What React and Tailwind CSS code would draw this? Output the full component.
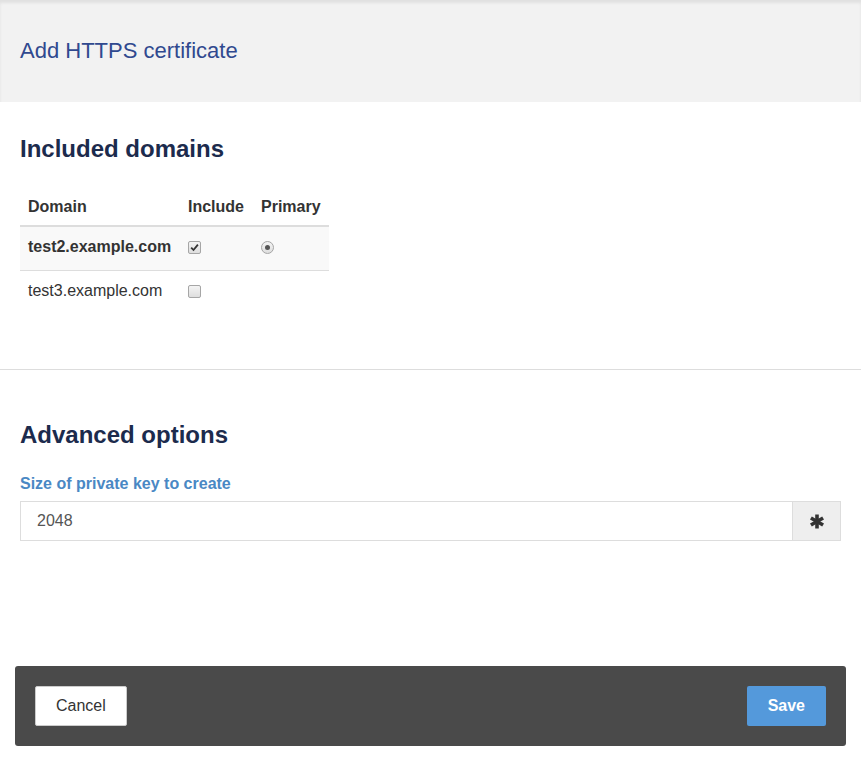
import React from "react";

function Checkbox({ checked }) {
  return (
    <span className="inline-flex h-[13px] w-[13px] items-center justify-center rounded-[2px] border border-[#a6a6a6] bg-gradient-to-b from-[#f4f4f4] to-[#dedede]">
      {checked && (
        <svg width="9" height="9" viewBox="0 0 9 9">
          <path d="M1.2 4.6 L3.5 7 L7.9 1.6" fill="none" stroke="#333" strokeWidth="1.8" />
        </svg>
      )}
    </span>
  );
}

function Radio() {
  return (
    <span className="inline-flex h-[13px] w-[13px] items-center justify-center rounded-full border border-[#a6a6a6] bg-gradient-to-b from-[#f4f4f4] to-[#dedede]">
      <span className="h-[5px] w-[5px] rounded-full bg-[#555]" />
    </span>
  );
}

export default function App() {
  return (
    <div
      className="flex min-h-screen flex-col bg-white text-[#333]"
      style={{ fontFamily: '"Liberation Sans", Arial, sans-serif' }}
    >
      <div className="flex h-[102px] items-center bg-[#f2f2f2] px-5 shadow-[inset_0_3px_3px_rgba(0,0,0,0.07)]">
        <h1 className="text-[22px] leading-[26px] text-[#30498f]">Add HTTPS certificate</h1>
      </div>

      <div className="px-5 pb-[55px]">
        <h2 className="mt-[34px] mb-[24px] text-[24px] font-bold leading-[26px] text-[#1c2b4d]">
          Included domains
        </h2>
        <table className="border-collapse text-[16px] leading-[22px]">
          <thead>
            <tr className="border-b-2 border-[#ddd]">
              <th className="w-[160px] px-2 pt-[10px] pb-[7px] text-left align-top font-bold">Domain</th>
              <th className="w-[73px] px-2 pt-[10px] pb-[7px] text-left align-top font-bold">Include</th>
              <th className="w-[76px] px-2 pt-[10px] pb-[7px] text-left align-top font-bold">Primary</th>
            </tr>
          </thead>
          <tbody>
            <tr className="border-b border-[#ddd] bg-[#f9f9f9]">
              <td className="px-2 pt-[9px] pb-[12px] align-top font-bold">test2.example.com</td>
              <td className="px-2 pt-[9px] pb-[12px] align-top">
                <div className="flex h-[22px] items-center"><Checkbox checked /></div>
              </td>
              <td className="px-2 pt-[9px] pb-[12px] align-top">
                <div className="flex h-[22px] items-center"><Radio /></div>
              </td>
            </tr>
            <tr>
              <td className="px-2 pt-[9px] pb-[12px] align-top">test3.example.com</td>
              <td className="px-2 pt-[9px] pb-[12px] align-top">
                <div className="flex h-[22px] items-center"><Checkbox /></div>
              </td>
              <td className="px-2 pt-[9px] pb-[12px] align-top"></td>
            </tr>
          </tbody>
        </table>
      </div>

      <div className="border-t border-[#ddd]" />

      <div className="px-5">
        <h2 className="mt-[52px] mb-[25px] text-[24px] font-bold leading-[26px] text-[#1c2b4d]">
          Advanced options
        </h2>
        <label className="block text-[16px] font-bold leading-[22px] text-[#4a88c4]">
          Size of private key to create
        </label>
        <div className="mt-[6px] flex h-[40px] border border-[#ddd]">
          <div className="flex flex-1 items-center px-4 text-[16px] text-[#555]">2048</div>
          <div className="flex w-[48px] items-center justify-center border-l border-[#ddd] bg-[#eee]">
            <svg width="14" height="15" viewBox="0 0 14 15">
              <g stroke="#333" strokeWidth="3.6" strokeLinecap="butt">
                <line x1="7" y1="0.5" x2="7" y2="14.5" />
                <line x1="0.9" y1="4" x2="13.1" y2="11" />
                <line x1="0.9" y1="11" x2="13.1" y2="4" />
              </g>
            </svg>
          </div>
        </div>
      </div>

      <div className="mx-[15px] mt-auto mb-[15px] flex h-[80px] items-center justify-between rounded-[3px] bg-[#4a4a4a] px-5">
        <button className="h-[40px] rounded-[2px] border border-[#ccc] bg-white px-5 text-[16px] text-[#333]">
          Cancel
        </button>
        <button className="h-[40px] rounded-[2px] bg-[#5499db] px-[21px] text-[16px] font-bold text-white">
          Save
        </button>
      </div>
    </div>
  );
}
